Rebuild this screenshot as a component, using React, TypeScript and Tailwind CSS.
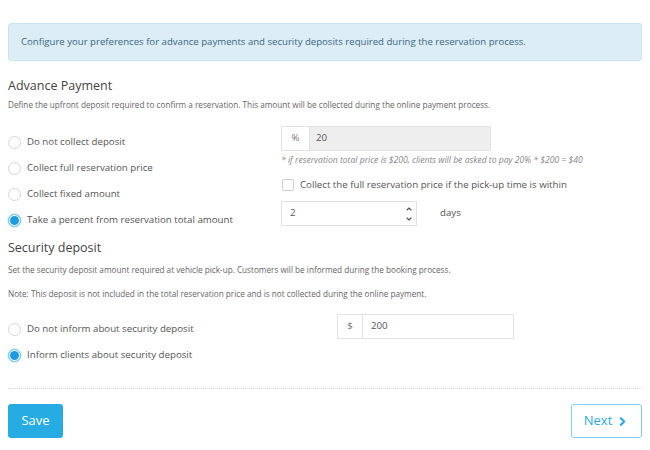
import { ChevronRight, ChevronUp, ChevronDown } from "lucide-react";

function Radio({ label, checked = false }: { label: string; checked?: boolean }) {
    return (
        <label className="flex items-center gap-[6px] h-[26px] text-[9.7px] text-[#555]">
            {checked ? (
                <span className="w-[13px] h-[13px] rounded-full border border-[#5bc0f0] bg-white flex items-center justify-center shadow-[0_0_2px_#7fd0f5]">
                    <span className="w-[9px] h-[9px] rounded-full bg-[#1e9be0]" />
                </span>
            ) : (
                <span className="w-[13px] h-[13px] rounded-full border border-[#d6d6d6] bg-white" />
            )}
            <span>{label}</span>
        </label>
    );
}

export default function App() {
    return (
        <main className="w-[650px] h-[450px] bg-white px-2 pt-[23px] font-['Open_Sans',sans-serif] text-[#555] overflow-hidden">
            <div className="h-[38px] flex items-center px-3 rounded-[3px] bg-[#dcedf6] border border-[#c9e6f0] text-[9.6px] text-[#3a6885]">
                Configure your preferences for advance payments and security deposits required during the reservation process.
            </div>

            <h3 className="mt-[15px] text-[12.5px] text-[#444] leading-[20px]">Advance Payment</h3>
            <p className="mt-[3px] text-[8.2px] leading-[12px] text-[#666]">
                Define the upfront deposit required to confirm a reservation. This amount will be collected during the online payment process.
            </p>

            <div className="flex mt-[12px]">
                <div className="w-[273px] pt-[6px]">
                    <Radio label="Do not collect deposit" />
                    <Radio label="Collect full reservation price" />
                    <Radio label="Collect fixed amount" />
                    <Radio label="Take a percent from reservation total amount" checked />
                </div>
                <div className="flex-1 pt-[3px]">
                    <div className="flex w-[210px] h-[25px] border border-[#e3e3e3] text-[9.7px]">
                        <span className="w-[28px] flex items-center justify-center bg-white text-[#777] border-r border-[#e3e3e3]">%</span>
                        <span className="flex-1 flex items-center pl-[6px] bg-[#eeeeee] text-[#555]">20</span>
                    </div>
                    <p className="mt-[3px] text-[8.6px] italic text-[#888] leading-[12px]">
                        * if reservation total price is $200, clients will be asked to pay 20% * $200 = $40
                    </p>
                    <label className="mt-[12px] flex items-center gap-[6px] h-[14px] text-[9.7px] text-[#555]">
                        <span className="w-[12px] h-[12px] rounded-[2px] border border-[#cfcfcf] bg-white ml-[1px]" />
                        <span>Collect the full reservation price if the pick-up time is within</span>
                    </label>
                    <div className="mt-[9px] flex items-center">
                        <div className="flex w-[136px] h-[25px] border border-[#e3e3e3] text-[9.7px]">
                            <span className="flex-1 flex items-center pl-[8px] text-[#555]">2</span>
                            <span className="w-[15px] flex flex-col items-center justify-center text-[#555]">
                                <ChevronUp size={8} strokeWidth={3.5} />
                                <ChevronDown size={8} strokeWidth={3.5} className="mt-[2px]" />
                            </span>
                        </div>
                        <span className="ml-[23px] text-[9.7px] text-[#555]">days</span>
                    </div>
                </div>
            </div>

            <h3 className="mt-[5px] text-[12.5px] text-[#444] leading-[20px]">Security deposit</h3>
            <p className="mt-[6px] text-[8.2px] leading-[12px] text-[#666]">
                Set the security deposit amount required at vehicle pick-up. Customers will be informed during the booking process.
            </p>
            <p className="mt-[12px] text-[8.2px] leading-[12px] text-[#666]">
                Note: This deposit is not included in the total reservation price and is not collected during the online payment.
            </p>

            <div className="flex mt-[14px]">
                <div className="w-[329px] pt-[2px]">
                    <Radio label="Do not inform about security deposit" />
                    <Radio label="Inform clients about security deposit" checked />
                </div>
                <div className="flex w-[177px] h-[25px] border border-[#e3e3e3] text-[9.7px]">
                    <span className="w-[25px] flex items-center justify-center text-[#777] border-r border-[#e3e3e3]">$</span>
                    <span className="flex-1 flex items-center pl-[8px] text-[#555]">200</span>
                </div>
            </div>

            <div className="mt-[20px] border-t border-dotted border-[#dcdcdc]" />

            <div className="mt-[15px] flex justify-between">
                <button className="w-[55px] h-[34px] rounded-[3px] bg-[#27abe3] text-white text-[13px]">Save</button>
                <button className="w-[71px] h-[34px] rounded-[3px] border border-[#7fcdf0] bg-white text-[#27abe3] text-[13px] flex items-center justify-center gap-[4px]">
                    Next
                    <ChevronRight size={13} strokeWidth={4} />
                </button>
            </div>
        </main>
    );
}
